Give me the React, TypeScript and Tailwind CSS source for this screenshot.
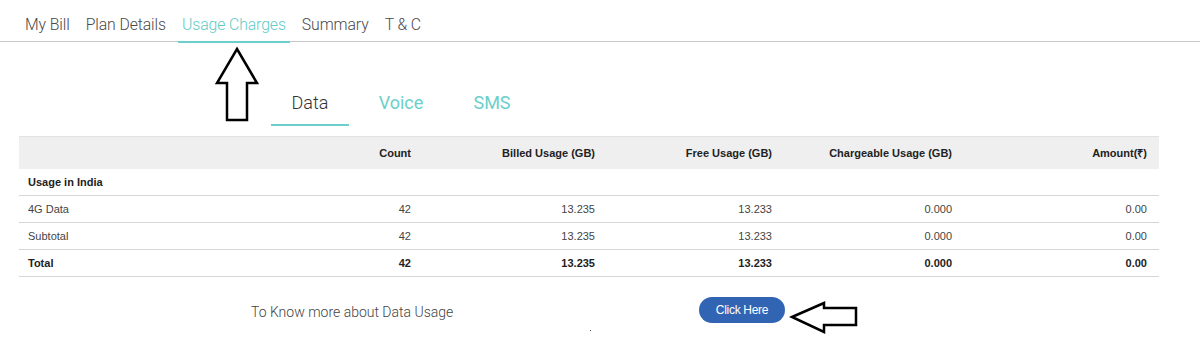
import React from "react";

const navItems = ["My Bill", "Plan Details", "Usage Charges", "Summary", "T & C"];
const subTabs = ["Data", "Voice", "SMS"];

type Row = { label: string; cells: string[]; bold?: boolean };

const headers = ["Count", "Billed Usage (GB)", "Free Usage (GB)", "Chargeable Usage (GB)", "Amount(₹)"];

const rows: Row[] = [
  { label: "4G Data", cells: ["42", "13.235", "13.233", "0.000", "0.00"] },
  { label: "Subtotal", cells: ["42", "13.235", "13.233", "0.000", "0.00"] },
  { label: "Total", cells: ["42", "13.235", "13.233", "0.000", "0.00"], bold: true },
];

const grid = "grid grid-cols-[321px_83px_184px_177px_180px_195px]";

function UpArrow() {
  return (
    <svg
      className="absolute left-[214px] top-[46px]"
      width="46"
      height="77"
      viewBox="0 0 46 77"
      fill="white"
      stroke="black"
      strokeWidth="2.5"
      strokeLinejoin="miter"
    >
      <polygon points="23,3 43,37 33,37 33,74 13,74 13,37 3,37" />
    </svg>
  );
}

function LeftArrow() {
  return (
    <svg
      className="mt-[10px] ml-[4px]"
      width="70"
      height="35"
      viewBox="0 0 70 35"
      fill="white"
      stroke="black"
      strokeWidth="2.5"
    >
      <polygon points="3,17 35,3 35,8 67,8 67,25 35,25 35,32" />
    </svg>
  );
}

export default function App() {
  return (
    <div className="relative w-[1200px] h-[349px] bg-white overflow-hidden font-['Roboto',_'Liberation_Sans',_sans-serif]">
      {/* top tabs */}
      <div className="flex items-start h-[42px] border-b border-[#c8c8c8] pl-[21px] gap-[8px]">
        {navItems.map((item) => (
          <div
            key={item}
            className={
              item === "Usage Charges"
                ? "px-[4px] pt-[13px] pb-[4px] -mb-[2px] leading-[24px] text-[15.8px] tracking-[-0.1px] font-light text-[#5fcbc6] border-b-2 border-[#6ccfcb]"
                : "px-[4px] pt-[13px] pb-[4px] -mb-[2px] leading-[24px] text-[15.8px] tracking-[-0.1px] font-light text-[#4a4a4a] border-b-2 border-transparent"
            }
          >
            {item}
          </div>
        ))}
      </div>

      <UpArrow />

      {/* sub tabs */}
      <div className="flex gap-[13px] ml-[271px] mt-[49px]">
        {subTabs.map((t) => (
          <div
            key={t}
            className={
              t === "Data"
                ? "w-[78px] text-center pb-[9px] leading-[24px] text-[18px] font-light text-[#333] border-b-2 border-[#6ccfcb]"
                : "w-[78px] text-center pb-[9px] leading-[24px] text-[18px] font-normal text-[#6ccfcb] border-b-2 border-transparent"
            }
          >
            {t}
          </div>
        ))}
      </div>

      {/* table */}
      <div className="ml-[19px] mt-[10px] w-[1140px] font-['Liberation_Sans',_Arial,_sans-serif] text-[11px]">
        <div className={`${grid} h-[33px] items-center bg-[#efefef] border-t border-[#e2e2e2] font-bold text-[#222]`}>
          <div />
          {headers.map((h) => (
            <div key={h} className="text-right pr-[12px]">
              {h}
            </div>
          ))}
        </div>
        <div className="h-[27px] flex items-center pl-[9px] border-b border-[#d6d6d6] font-bold text-[#222]">
          Usage in India
        </div>
        {rows.map((r) => (
          <div
            key={r.label}
            className={`${grid} h-[27px] items-center border-b border-[#d6d6d6] ${
              r.bold ? "font-bold text-[#222]" : "text-[#444]"
            }`}
          >
            <div className="pl-[9px]">{r.label}</div>
            {r.cells.map((c, i) => (
              <div key={i} className="text-right pr-[12px]">
                {c}
              </div>
            ))}
          </div>
        ))}
      </div>

      {/* bottom link */}
      <div className="relative flex items-start ml-[251px] mt-[13px]">
        <div className="w-[448px] mt-[12px] leading-[20px] text-[14px] font-light text-[#444]">
          To Know more about Data Usage
        </div>
        <button className="mt-[7px] w-[86px] h-[26px] rounded-full bg-[#3165b4] text-white text-[12px] font-['Liberation_Sans',_Arial,_sans-serif] tracking-[-0.3px]">
          Click Here
        </button>
        <LeftArrow />
        <span className="absolute left-[339px] top-[40px] w-[1px] h-[1px] bg-[#555]" />
      </div>
    </div>
  );
}
